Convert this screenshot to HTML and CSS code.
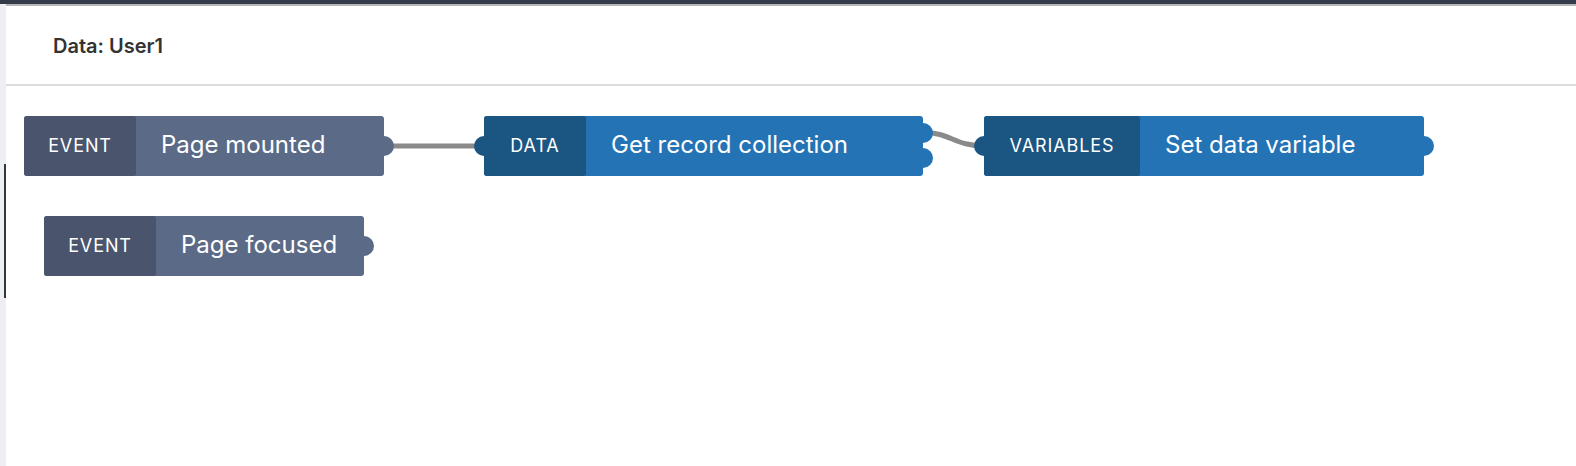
FILE: index.html
```html
<!DOCTYPE html>
<html lang="en">
<head>
<meta charset="utf-8">
<title>Data: User1</title>
<link rel="stylesheet" href="styles.css">
</head>
<body>
<div class="topbar"></div>
<div class="layout">
  <aside class="sidebar"><div class="sidebar-mark"></div></aside>
  <main class="content">
    <header class="header"><h1 class="title">Data: User1</h1></header>
    <section class="canvas">
      <svg class="wires" xmlns="http://www.w3.org/2000/svg">
        <path d="M378 60 L478 60" />
        <path d="M918 46.5 C944 46.5 949 60 978 60" />
      </svg>

      <div class="node event n1">
        <div class="label">Event</div>
        <div class="text">Page mounted</div>
        <span class="port out mid"></span>
      </div>

      <div class="node data n2">
        <span class="port in"></span>
        <div class="label">Data</div>
        <div class="text">Get record collection</div>
        <span class="port out upper"></span>
        <span class="port out lower"></span>
      </div>

      <div class="node data n3">
        <span class="port in"></span>
        <div class="label">Variables</div>
        <div class="text">Set data variable</div>
        <span class="port out mid"></span>
      </div>

      <div class="node event n4">
        <div class="label">Event</div>
        <div class="text">Page focused</div>
        <span class="port out mid"></span>
      </div>
    </section>
  </main>
</div>
</body>
</html>
```
FILE: styles.css
```css
* { box-sizing: border-box; }

html, body {
  margin: 0;
  height: 100%;
  background: #ffffff;
  font-family: Inter, "Open Sans", sans-serif;
  overflow: hidden;
}

.topbar {
  height: 4px;
  background: #333b4b;
}

.layout {
  display: flex;
  height: calc(100% - 4px);
}

.sidebar {
  width: 6px;
  flex: none;
  background: #eeeff2;
  padding-top: 160px;
}

.sidebar-mark {
  width: 2px;
  height: 134px;
  margin-left: 4px;
  background: #2f3745;
}

.content {
  flex: 1;
  display: flex;
  flex-direction: column;
  border-top: 2px solid #b7b7b7;
}

.header {
  height: 80px;
  flex: none;
  display: flex;
  align-items: center;
  padding: 2px 0 0 47px;
  border-bottom: 2px solid #dcdcde;
}

.title {
  margin: 0;
  font-size: 20px;
  font-weight: 600;
  color: #333333;
}

.canvas {
  position: relative;
  flex: 1;
}

.wires {
  position: absolute;
  left: 0;
  top: 0;
  width: 100%;
  height: 100%;
  fill: none;
  stroke: #8a8a8a;
  stroke-width: 5;
}

.node {
  position: absolute;
  display: flex;
  height: 60px;
  border-radius: 3px;
  color: #ffffff;
}

.label {
  display: flex;
  align-items: center;
  justify-content: center;
  flex: none;
  height: 100%;
  padding-bottom: 1px;
  border-radius: 3px;
  font-size: 18px;
  font-weight: 400;
  letter-spacing: 0.9px;
  text-transform: uppercase;
}

.text {
  display: flex;
  align-items: center;
  flex: none;
  height: 100%;
  padding: 0 0 3px 25px;
  font-size: 24px;
  font-weight: 400;
  white-space: nowrap;
}

.event { background: #5b6a86; }
.event .label { background: #4a556d; }
.event .port.out { background: #5b6a86; }

.data { background: #2473b5; }
.data .label { background: #1b5582; }
.data .port.out { background: #2473b5; }
.data .port.in { background: #1b5582; }

.port {
  position: absolute;
  width: 20px;
  height: 20px;
  border-radius: 50%;
}
.port.in { left: -10px; top: 20px; }
.port.out { right: -10px; }
.port.mid { top: 20px; }
.port.upper { top: 7px; }
.port.lower { top: 32px; }

.n1 { left: 18px; top: 30px; }
.n1 .label { width: 112px; }
.n1 .text { width: 248px; }

.n2 { left: 478px; top: 30px; }
.n2 .label { width: 102px; }
.n2 .text { width: 337px; }

.n3 { left: 978px; top: 30px; }
.n3 .label { width: 156px; }
.n3 .text { width: 284px; }

.n4 { left: 38px; top: 130px; }
.n4 .label { width: 112px; }
.n4 .text { width: 208px; }
```
